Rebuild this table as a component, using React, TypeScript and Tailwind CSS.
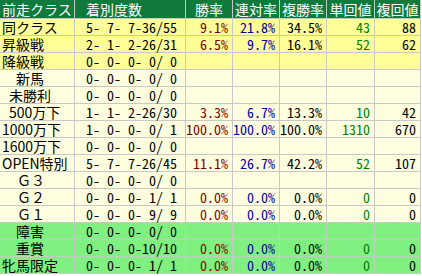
import React from "react";

type Row = {
  label: string;
  ind: string;
  rec: string;
  v?: [string, string, string, string, string];
  bg: string;
};

const Y = "bg-[#ffff99]";
const P = "bg-[#ffffe0]";
const G = "bg-[#80f080]";

const rows: Row[] = [
  { label: "同クラス", ind: "pl-[2px]", rec: "5- 7- 7-36/55", v: ["9.1%", "21.8%", "34.5%", "43", "88"], bg: Y },
  { label: "昇級戦", ind: "pl-[2px]", rec: "2- 1- 2-26/31", v: ["6.5%", "9.7%", "16.1%", "52", "62"], bg: Y },
  { label: "降級戦", ind: "pl-[2px]", rec: "0- 0- 0- 0/ 0", bg: Y },
  { label: "新馬", ind: "pl-[16px]", rec: "0- 0- 0- 0/ 0", bg: P },
  { label: "未勝利", ind: "pl-[9px]", rec: "0- 0- 0- 0/ 0", bg: P },
  { label: "500万下", ind: "pl-[9px]", rec: "1- 1- 2-26/30", v: ["3.3%", "6.7%", "13.3%", "10", "42"], bg: P },
  { label: "1000万下", ind: "pl-[2px]", rec: "1- 0- 0- 0/ 1", v: ["100.0%", "100.0%", "100.0%", "1310", "670"], bg: P },
  { label: "1600万下", ind: "pl-[2px]", rec: "0- 0- 0- 0/ 0", bg: P },
  { label: "OPEN特別", ind: "pl-[2px]", rec: "5- 7- 7-26/45", v: ["11.1%", "26.7%", "42.2%", "52", "107"], bg: P },
  { label: "Ｇ３", ind: "pl-[17px]", rec: "0- 0- 0- 0/ 0", bg: P },
  { label: "Ｇ２", ind: "pl-[17px]", rec: "0- 0- 0- 1/ 1", v: ["0.0%", "0.0%", "0.0%", "0", "0"], bg: P },
  { label: "Ｇ１", ind: "pl-[17px]", rec: "0- 0- 0- 9/ 9", v: ["0.0%", "0.0%", "0.0%", "0", "0"], bg: P },
  { label: "障害", ind: "pl-[16px]", rec: "0- 0- 0- 0/ 0", bg: G },
  { label: "重賞", ind: "pl-[16px]", rec: "0- 0- 0-10/10", v: ["0.0%", "0.0%", "0.0%", "0", "0"], bg: G },
  { label: "牝馬限定", ind: "pl-[2px]", rec: "0- 0- 0- 1/ 1", v: ["0.0%", "0.0%", "0.0%", "0", "0"], bg: G },
];

const colors = ["text-[#800000]", "text-[#0000a0]", "text-black", "text-[#008000]", "text-black"];

export default function App() {
  return (
    <div
      className="w-[422px] h-[276px] bg-white text-[14px] leading-[16px]"
      style={{ fontFamily: '"Noto Sans CJK JP", "Noto Sans", sans-serif' }}
    >
      <div className="w-[421px] bg-[#c8c8c8] pr-px pb-px grid grid-cols-[74px_110px_46px_46px_46px_47px_45px] gap-px">
        <div className="h-[18px] bg-[#0f7a3c] text-white pl-[2px] leading-[18px] whitespace-nowrap">前走クラス</div>
        <div className="h-[18px] bg-[#0f7a3c] text-white pl-[11px] leading-[18px]">着別度数</div>
        {["勝率", "連対率", "複勝率", "単回値", "複回値"].map((h) => (
          <div key={h} className="h-[18px] bg-[#0f7a3c] text-white text-center leading-[18px] whitespace-nowrap">
            {h}
          </div>
        ))}
        {rows.map((r, i) => (
          <React.Fragment key={i}>
            <div className={`h-[16px] ${r.bg} ${r.ind} whitespace-nowrap text-black`}>{r.label}</div>
            <div className={`h-[16px] ${r.bg} pl-[11px] whitespace-pre text-black [font-feature-settings:'hwid']`}>{r.rec}</div>
            {[0, 1, 2, 3, 4].map((j) => (
              <div
                key={j}
                className={`h-[16px] ${r.bg} pr-[4px] text-right whitespace-pre [font-feature-settings:'hwid'] ${colors[j]}`}
              >
                {r.v ? r.v[j] : ""}
              </div>
            ))}
          </React.Fragment>
        ))}
      </div>
    </div>
  );
}
